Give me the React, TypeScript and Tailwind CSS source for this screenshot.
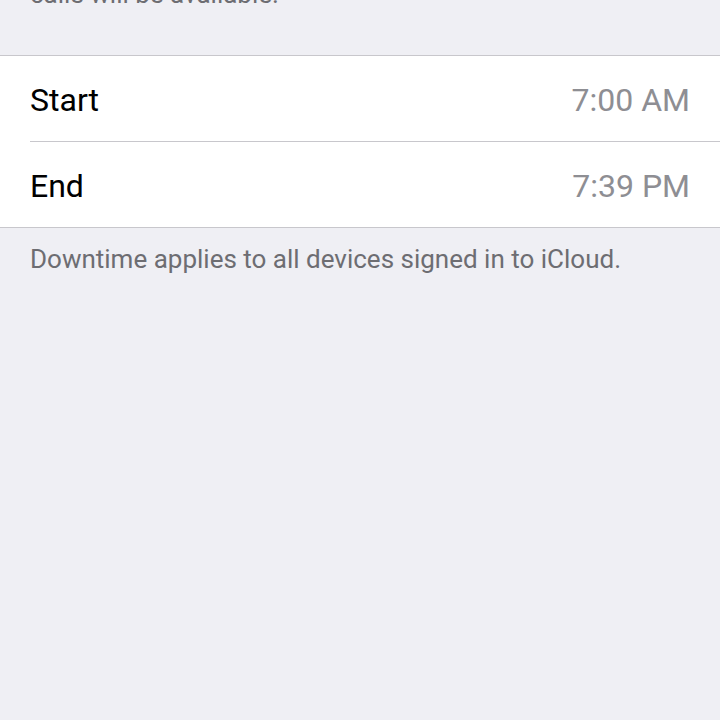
export default function App() {
  const rows = [
    { label: "Start", value: "7:00 AM" },
    { label: "End", value: "7:39 PM" },
  ];

  return (
    <main
      className="min-h-[720px] h-[720px] overflow-hidden bg-[#efeff4]"
      style={{ fontFamily: "Roboto, 'Noto Sans', sans-serif" }}
    >
      {/* tail of the previous section's footer */}
      <p className="-mt-[21px] px-[30px] text-[26px] leading-[30px] text-[#6d6d72]">
        calls will be available.
      </p>

      <div className="mt-[46px] border-y border-[#c8c7cc] bg-white">
        {rows.map((row, i) => (
          <div key={row.label} className="pl-[30px]">
            <div
              className={
                "flex items-center justify-between pr-[30px] pt-[2px] " +
                (i < rows.length - 1
                  ? "h-[86px] border-b border-[#c8c7cc]"
                  : "h-[85px]")
              }
            >
              <span className="text-[32px] text-black">{row.label}</span>
              <span className="text-[32px] text-[#8e8e93]">{row.value}</span>
            </div>
          </div>
        ))}
      </div>

      <p className="px-[30px] pt-[16px] text-[26px] leading-[30px] text-[#6d6d72]">
        Downtime applies to all devices signed in to iCloud.
      </p>
    </main>
  );
}
